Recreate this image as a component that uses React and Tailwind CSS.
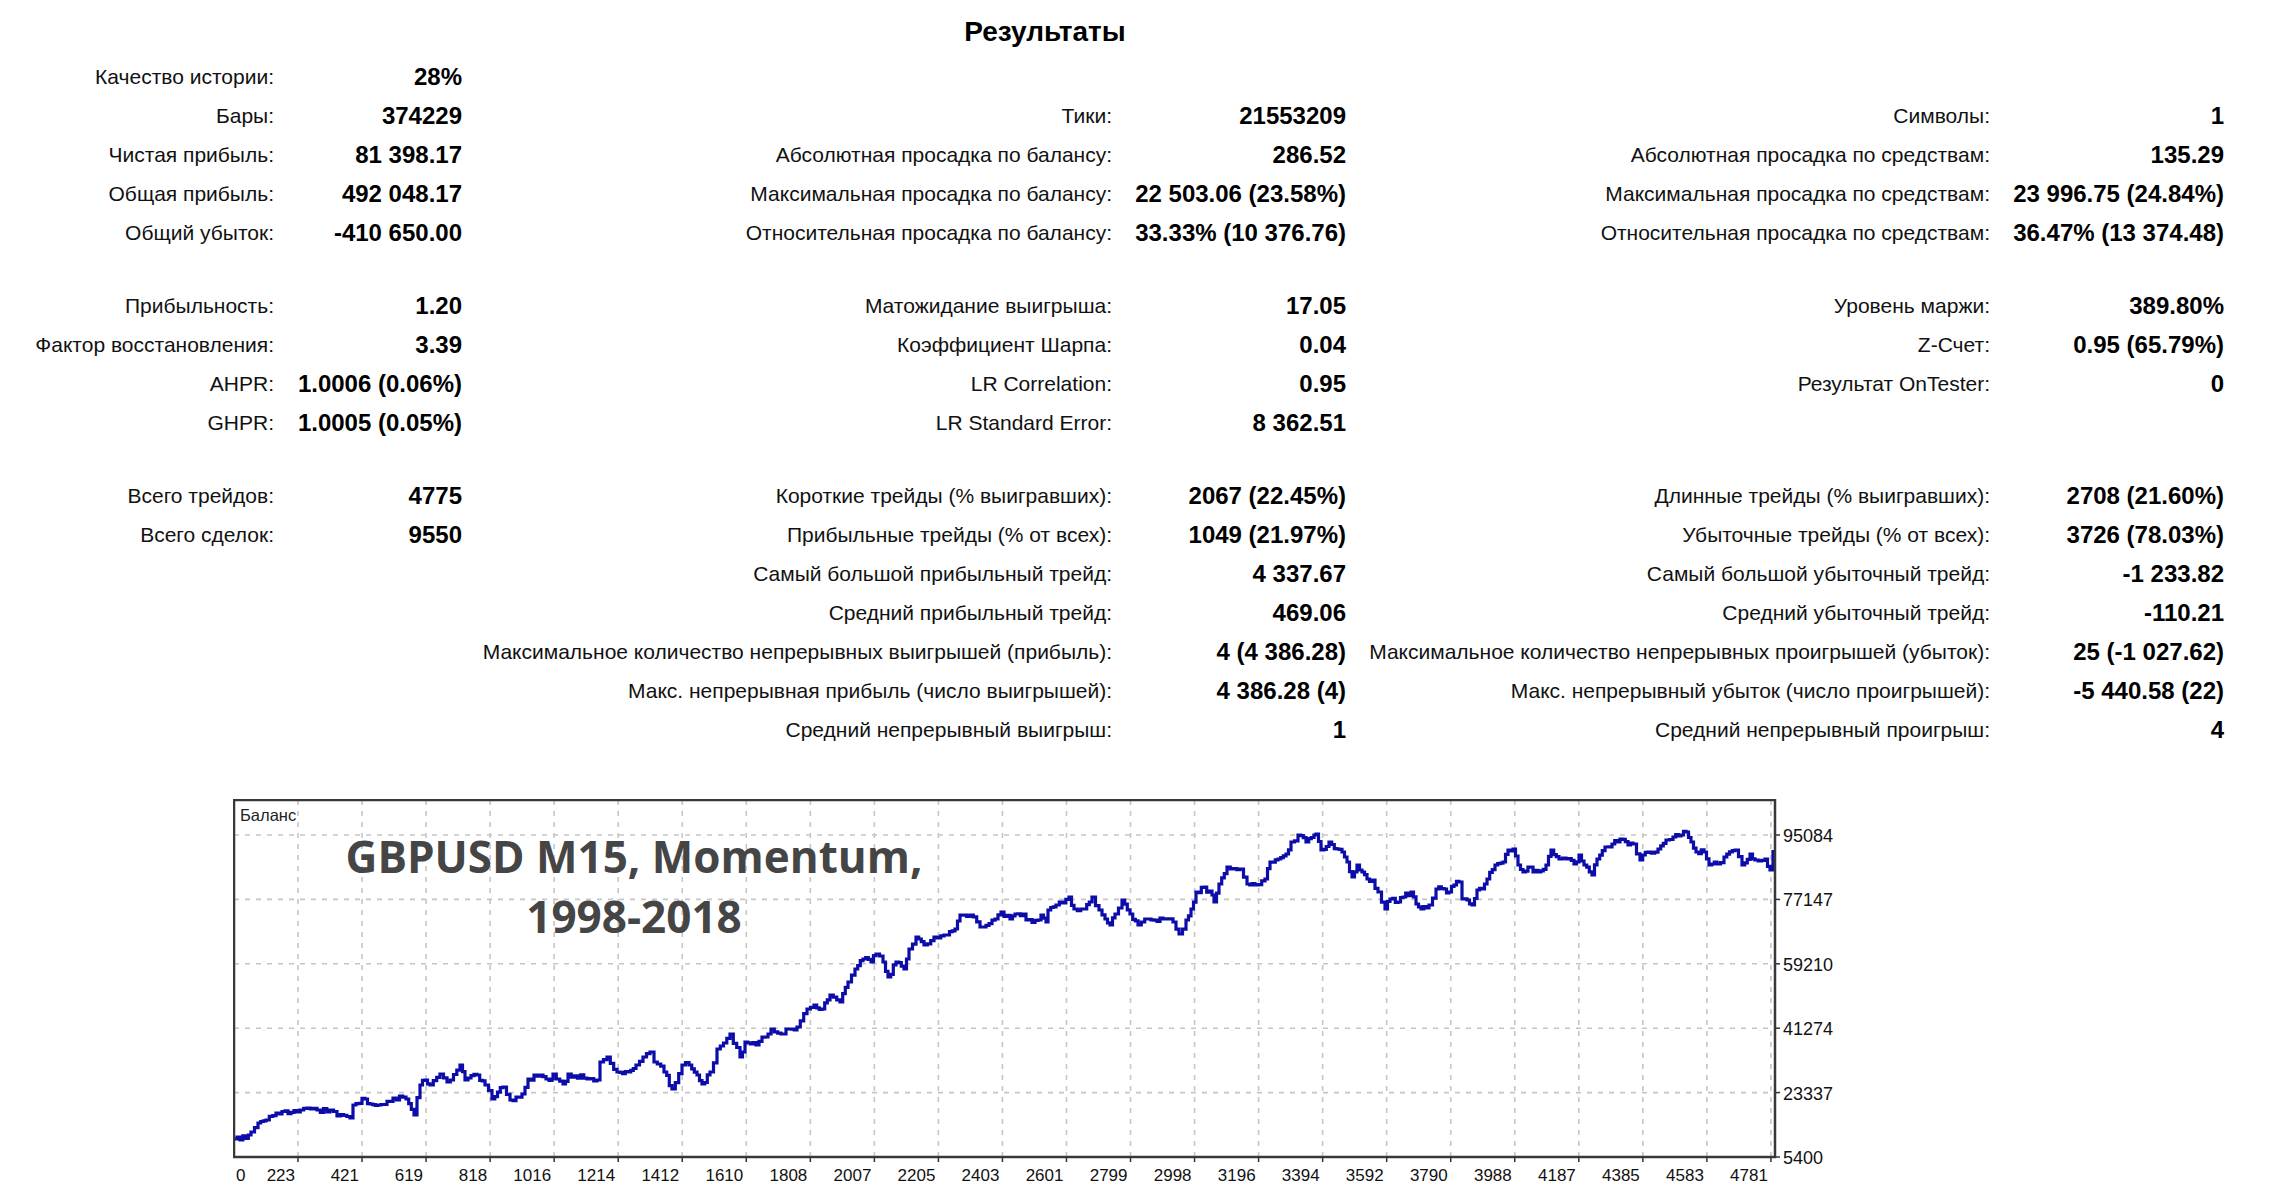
import React from "react";

const rows = [
  [["Качество истории:", "28%"], null, null],
  [["Бары:", "374229"], ["Тики:", "21553209"], ["Символы:", "1"]],
  [["Чистая прибыль:", "81 398.17"], ["Абсолютная просадка по балансу:", "286.52"], ["Абсолютная просадка по средствам:", "135.29"]],
  [["Общая прибыль:", "492 048.17"], ["Максимальная просадка по балансу:", "22 503.06 (23.58%)"], ["Максимальная просадка по средствам:", "23 996.75 (24.84%)"]],
  [["Общий убыток:", "-410 650.00"], ["Относительная просадка по балансу:", "33.33% (10 376.76)"], ["Относительная просадка по средствам:", "36.47% (13 374.48)"]],
  "gap",
  [["Прибыльность:", "1.20"], ["Матожидание выигрыша:", "17.05"], ["Уровень маржи:", "389.80%"]],
  [["Фактор восстановления:", "3.39"], ["Коэффициент Шарпа:", "0.04"], ["Z-Счет:", "0.95 (65.79%)"]],
  [["AHPR:", "1.0006 (0.06%)"], ["LR Correlation:", "0.95"], ["Результат OnTester:", "0"]],
  [["GHPR:", "1.0005 (0.05%)"], ["LR Standard Error:", "8 362.51"], null],
  "gap",
  [["Всего трейдов:", "4775"], ["Короткие трейды (% выигравших):", "2067 (22.45%)"], ["Длинные трейды (% выигравших):", "2708 (21.60%)"]],
  [["Всего сделок:", "9550"], ["Прибыльные трейды (% от всех):", "1049 (21.97%)"], ["Убыточные трейды (% от всех):", "3726 (78.03%)"]],
  [null, ["Самый большой прибыльный трейд:", "4 337.67"], ["Самый большой убыточный трейд:", "-1 233.82"]],
  [null, ["Средний прибыльный трейд:", "469.06"], ["Средний убыточный трейд:", "-110.21"]],
  [null, ["Максимальное количество непрерывных выигрышей (прибыль):", "4 (4 386.28)"], ["Максимальное количество непрерывных проигрышей (убыток):", "25 (-1 027.62)"]],
  [null, ["Макс. непрерывная прибыль (число выигрышей):", "4 386.28 (4)"], ["Макс. непрерывный убыток (число проигрышей):", "-5 440.58 (22)"]],
  [null, ["Средний непрерывный выигрыш:", "1"], ["Средний непрерывный проигрыш:", "4"]],
];

// key points of the balance line, page coords
const pts = [
  [234,1137],[240,1138],[251,1130],[258,1121],[266,1118],[276,1111],[297,1110],[307,1106],[317,1108],[330,1108],[337,1114],[350,1116],[353,1103],[365,1097],[370,1102],[378,1103],[393,1096],[406,1097],[414,1113],[420,1083],[425,1078],[430,1083],[440,1072],[447,1080],[460,1063],[465,1078],[477,1073],[485,1083],[492,1097],[503,1085],[510,1098],[522,1092],[528,1077],[540,1073],[552,1077],[553,1072],[563,1082],[568,1072],[587,1077],[597,1078],[600,1060],[607,1055],[617,1070],[628,1070],[636,1063],[643,1055],[650,1050],[654,1060],[664,1070],[672,1087],[682,1063],[689,1063],[697,1073],[702,1082],[710,1070],[717,1047],[730,1032],[740,1055],[745,1040],[756,1043],[771,1027],[781,1032],[786,1027],[797,1025],[807,1007],[814,1003],[822,1007],[830,993],[840,1000],[848,980],[855,967],[863,957],[871,960],[876,952],[883,960],[888,975],[896,960],[904,967],[909,947],[916,935],[924,943],[934,935],[944,933],[955,927],[960,913],[970,913],[980,925],[995,917],[1001,910],[1010,917],[1015,912],[1023,912],[1026,918],[1038,918],[1041,913],[1046,920],[1048,908],[1056,903],[1069,895],[1074,907],[1084,907],[1092,895],[1099,908],[1105,917],[1110,923],[1115,912],[1122,898],[1130,912],[1138,923],[1148,917],[1163,917],[1173,920],[1179,932],[1186,918],[1191,907],[1196,890],[1204,885],[1212,893],[1214,900],[1219,882],[1227,865],[1240,867],[1247,882],[1255,883],[1265,877],[1270,860],[1278,857],[1286,852],[1291,840],[1298,833],[1306,840],[1314,833],[1316,832],[1321,848],[1329,840],[1337,847],[1342,850],[1347,860],[1352,875],[1357,863],[1362,870],[1367,877],[1372,878],[1378,890],[1385,907],[1390,897],[1398,900],[1403,895],[1411,890],[1416,902],[1421,907],[1429,903],[1436,887],[1444,887],[1449,890],[1454,883],[1459,880],[1462,897],[1467,898],[1472,903],[1477,888],[1482,887],[1487,877],[1495,863],[1503,860],[1508,848],[1513,847],[1518,863],[1523,870],[1528,865],[1533,870],[1538,870],[1546,863],[1551,848],[1559,857],[1566,857],[1574,862],[1579,853],[1584,863],[1592,873],[1597,857],[1605,845],[1612,842],[1620,837],[1628,843],[1633,842],[1640,858],[1648,850],[1658,847],[1666,838],[1673,835],[1681,833],[1686,830],[1691,840],[1696,850],[1704,850],[1709,863],[1717,862],[1724,855],[1735,848],[1742,863],[1750,852],[1755,858],[1765,857],[1770,868],[1773,848],
];

function rng(seed) {
  let a = seed;
  return () => {
    a |= 0;
    a = (a + 0x6d2b79f5) | 0;
    let t = Math.imul(a ^ (a >>> 15), 1 | a);
    t = (t + Math.imul(t ^ (t >>> 7), 61 | t)) ^ t;
    return ((t ^ (t >>> 14)) >>> 0) / 4294967296;
  };
}

function buildPath() {
  const r = rng(7);
  const ox = 233, oy = 797;
  let d = `M${pts[0][0] - ox} ${pts[0][1] - oy}`;
  for (let i = 1; i < pts.length; i++) {
    const [x0, y0] = pts[i - 1];
    const [x1, y1] = pts[i];
    const n = Math.max(1, Math.round((x1 - x0) / 3));
    for (let j = 1; j <= n; j++) {
      const x = x0 + ((x1 - x0) * j) / n - ox;
      const noise = j < n ? (r() - 0.5) * 5 : 0;
      const y = y0 + ((y1 - y0) * j) / n + noise - oy;
      d += ` H${x.toFixed(1)} V${y.toFixed(1)}`;
    }
  }
  return d;
}

const xLabels = ["223","421","619","818","1016","1214","1412","1610","1808","2007","2205","2403","2601","2799","2998","3196","3394","3592","3790","3988","4187","4385","4583","4781"];
const yLabels = ["5400","23337","41274","59210","77147","95084"];

const Cell = ({ pair, value }) => (
  <div
    className={
      value
        ? "flex h-[39px] items-center justify-end whitespace-nowrap text-[24px] font-bold text-black"
        : "flex h-[39px] items-center justify-end whitespace-nowrap text-[21px] text-[#111]"
    }
  >
    {pair ? (value ? pair[1] : pair[0]) : ""}
  </div>
);

const BalanceChart = () => {
  const L = 1, R = 1542, T = 1, B = 358;
  const d = buildPath();
  return (
    <div className="relative ml-[233px] mt-[50px] h-[395px] w-[1620px]">
      <svg width="1620" height="395" className="block">
        {/* grid */}
        {xLabels.map((_, k) => {
          const x = 65 + 64.04 * k;
          return (
            <g key={"v" + k}>
              <line x1={x} y1={T} x2={x} y2={B} stroke="#c6c6c6" strokeWidth="1.6" strokeDasharray="5 6" />
              <line x1={x} y1={B} x2={x} y2={B + 5} stroke="#333" strokeWidth="1.5" />
              <text x={x - 3} y={382} fontSize="17" textAnchor="end" fill="#111">
                {xLabels[k]}
              </text>
            </g>
          );
        })}
        {yLabels.map((lbl, k) => {
          const y = B - 64.4 * k;
          return (
            <g key={"h" + k}>
              {k > 0 && (
                <line x1={L} y1={y} x2={R} y2={y} stroke="#c6c6c6" strokeWidth="1.6" strokeDasharray="5 6" />
              )}
              <line x1={R} y1={y} x2={R + 5} y2={y} stroke="#333" strokeWidth="1.5" />
              <text x={1550} y={y + 7} fontSize="18" fill="#111">
                {lbl}
              </text>
            </g>
          );
        })}
        <text x={3} y={382} fontSize="17" fill="#111">0</text>
        {/* balance line */}
        <path d={d} fill="none" stroke="#0c0ca8" strokeWidth="3.2" strokeLinejoin="miter" />
        {/* frame */}
        <rect x={L} y={T} width={R - L} height={B - T} fill="none" stroke="#383838" strokeWidth="2.5" />
      </svg>
      <div className="absolute left-[7px] top-[6px] text-[16.5px] leading-[20px] text-[#222]">Баланс</div>
      <div className="absolute left-[101px] top-[27px] w-[600px] text-center font-['Open_Sans',sans-serif] text-[44px] font-bold leading-[60px] text-[#454545]">
        GBPUSD M15, Momentum,
        <br />
        1998-2018
      </div>
    </div>
  );
};

export default function App() {
  return (
    <div className="min-h-screen w-[2289px] bg-white font-['Liberation_Sans',Arial,sans-serif] text-black">
      {/* header */}
      <div className="flex h-[57px] w-[2090px] items-center justify-center pt-[7px] text-[28px] font-bold">
        Результаты
      </div>
      {/* stats table */}
      <div className="grid grid-cols-[274px_188px_650px_234px_644px_234px]">
        {rows.map((row, i) =>
          row === "gap" ? (
            <div key={i} className="col-span-6 h-[34px]" />
          ) : (
            row.map((pair, j) => (
              <React.Fragment key={i + "-" + j}>
                <Cell pair={pair} />
                <Cell pair={pair} value />
              </React.Fragment>
            ))
          )
        )}
      </div>
      {/* balance chart */}
      <BalanceChart />
    </div>
  );
}
